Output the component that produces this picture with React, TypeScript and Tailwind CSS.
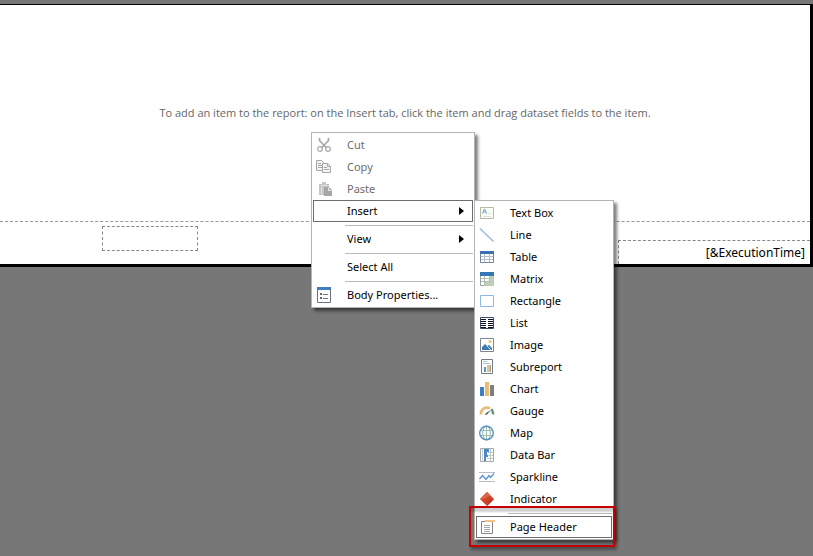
import type { ReactNode } from "react";

type Item = {
  label: string;
  icon?: ReactNode;
  disabled?: boolean;
  active?: boolean;
  submenu?: boolean;
};

type Entry = Item | "separator";

function Icon({ children }: { children?: ReactNode }) {
  return (
    <svg width="16" height="16" viewBox="0 0 16 16" fill="none" className="shrink-0" aria-hidden="true">
      {children}
    </svg>
  );
}

const cutIcon = (
  <g stroke="#a9a9a9">
    <path d="M3.5 1v2.5L10.5 11M12.5 1v2.5L5.5 11" strokeWidth="1.8" />
    <circle cx="4" cy="12" r="2.3" strokeWidth="1.2" />
    <circle cx="12" cy="12" r="2.3" strokeWidth="1.2" />
  </g>
);

const copyIcon = (
  <g stroke="#a6a6a6">
    <path d="M.5 1.5h5l2 2v8h-7zM2 4.5h3M2 6.5h4M2 8.5h4" fill="#f4f4f4" />
    <path d="M6.5 4.5h5l3 3v6h-8zM11.5 4.5v3h3M8 8.5h3M8 10.5h5" fill="#f4f4f4" />
  </g>
);

const pasteIcon = (
  <>
    <path d="M3 3h3V1h4v2h3v4H8v7H3z" fill="#c6c6c6" />
    <path d="M5 4.5h6M5.5 6v7" stroke="#e2e2e2" />
    <path d="M8 6h5l3 3v6H8z" fill="#a6a6a6" />
    <path d="M12.5 6.5v3h3" stroke="#eee" />
  </>
);

const propertiesIcon = (
  <>
    <path d="M1.5 1.5h13v14h-13z" fill="#fff" stroke="#6b737e" />
    <path d="M1 0h14v3H1z" fill="#3f7dbd" />
    <path d="M4 6h2v2H4zM4 10h2v2H4z" fill="#666" />
    <path d="M7 7.5h5M7 11.5h5" stroke="#777" />
  </>
);

const textBoxIcon = (
  <>
    <path d="M1.5 2.5h13v11h-13z" fill="#fbfcf8" stroke="#b2bca3" />
    <path d="M3.5 8.5 5.3 4h.4l1.8 4.5M4.2 7h2.6" stroke="#6fa4c8" />
    <path d="M4 11.5h8M9 8.5h3" stroke="#dfe3d5" />
  </>
);

const lineIcon = <path d="m1 1.5 13.5 13" stroke="#a3bdda" strokeWidth="1.7" />;

const tableIcon = (
  <>
    <path d="M1.5 2.5h13v11h-13z" fill="#fff" stroke="#7186a5" />
    <path d="M1 2h14v3H1z" fill="#3c70b0" />
    <path d="M5.5 5v8M10.5 5v8M2 7.5h12M2 10.5h12" stroke="#b7bec9" />
  </>
);

const matrixIcon = (
  <>
    <path d="M1.5 1.5h13v13h-13z" fill="#fff" stroke="#99a49d" />
    <path d="M10 5h5v10H5v-4h5z" fill="#bdcfb6" />
    <path d="M1 1h14v4H1z" fill="#3677b7" />
    <path d="M5.5 5v9M10.5 5v6M2 7.5h8M2 10.5h9" stroke="#b4bcb7" />
  </>
);

const rectangleIcon = <path d="M1.5 2.5h13v11h-13z" fill="#fff" stroke="#8fb9ec" />;

const listIcon = (
  <>
    <path d="M1.5 2.5h13v11h-13z" fill="#fff" stroke="#3f4964" />
    <path d="M2 4.5h5M9 4.5h5M2 6.5h5M9 6.5h5M2 8.5h5M9 8.5h5M2 10.5h5M9 10.5h5M2 12.5h5M9 12.5h5" stroke="#0b1020" />
  </>
);

const imageIcon = (
  <>
    <path d="M1.5 1.5h13v13h-13z" fill="#fff" stroke="#7c8594" />
    <path d="M3 13v-3l3-3 2 2 2-1 3 3v2z" fill="#3c7ab8" />
    <path d="m8 9 4 4" stroke="#d5e4f1" />
    <circle cx="11" cy="4.5" r="1.5" fill="#edc66f" />
  </>
);

const subreportIcon = (
  <>
    <path d="M2.5.5h11v14h-11z" fill="#fff" stroke="#747b85" />
    <path d="M4 2.5h4M4 4.5h7" stroke="#a9bfd6" />
    <path d="M5 8h2v5H5z" fill="#5e93c9" />
    <path d="M8 6h3v7H8z" fill="#e8c07a" />
    <path d="M11.5 6v7" stroke="#a0a0a0" />
  </>
);

const chartIcon = (
  <>
    <path d="M1 6h4v9H1z" fill="#3d7fc5" />
    <path d="M6 1h4v14H6z" fill="#e6bd72" />
    <path d="M11 4h4v11h-4z" fill="#7f7f7f" />
  </>
);

const gaugeIcon = (
  <>
    <path d="M2 11.5A6 6 0 0 1 11 5.5" stroke="#e6bd78" strokeWidth="2.6" />
    <path d="M12.2 6.2A6 6 0 0 1 14 11.5" stroke="#629b7c" strokeWidth="2.4" />
    <path d="m6 12 1-2 5-3-4 4.5z" fill="#555" />
  </>
);

const mapIcon = (
  <>
    <path d="M7.5 1v14M1 5.5h13M1 10.5h13" stroke="#9cc3ad" />
    <ellipse cx="7.5" cy="8" rx="3.8" ry="7" stroke="#8db8b0" />
    <circle cx="7.5" cy="8" r="6.8" stroke="#5b8fc4" strokeWidth="1.4" />
  </>
);

const dataBarIcon = (
  <>
    <path d="M1.5 1.5h13v13h-13z" fill="#fff" stroke="#a3abb0" />
    <path d="M3 2h1v12H3z" fill="#ccd4d6" />
    <path d="M5 2h5v3H8v3h1v2H7v4H5z" fill="#4a86c8" />
    <path d="M11.5 2v12M9 5.5h5M9 8.5h5M8 11.5h6" stroke="#bcc9c4" />
  </>
);

const sparklineIcon = (
  <>
    <path d="M0 3.5h16M0 12.5h16" stroke="#b9bec2" />
    <path d="m.5 10 3-3.5 3.5 4 3-4 1.5 2L15 4.5" stroke="#5e8fd0" strokeWidth="1.3" />
  </>
);

const indicatorIcon = (
  <>
    <path d="m8 1 7 7-7 7-7-7z" fill="#cf4429" />
    <path d="m8 1 3.5 3.5L4.5 8 1 8z" fill="#de6448" />
    <path d="m8 15 7-7-4 1z" fill="#ae331d" />
  </>
);

const pageHeaderIcon = (
  <>
    <path d="M2.5 2.5h11v12h-11z" fill="#fff" stroke="#858585" />
    <path d="M6 1h10v2H6z" fill="#efc289" />
    <path d="M5 6.5h6M5 8.5h6M5 10.5h6M5 12.5h6" stroke="#aaa" />
  </>
);

const CONTEXT_MENU: Entry[] = [
  { label: "Cut", icon: cutIcon, disabled: true },
  { label: "Copy", icon: copyIcon, disabled: true },
  { label: "Paste", icon: pasteIcon, disabled: true },
  { label: "Insert", active: true, submenu: true },
  "separator",
  { label: "View", submenu: true },
  "separator",
  { label: "Select All" },
  "separator",
  { label: "Body Properties...", icon: propertiesIcon },
];

const INSERT_MENU: Entry[] = [
  { label: "Text Box", icon: textBoxIcon },
  { label: "Line", icon: lineIcon },
  { label: "Table", icon: tableIcon },
  { label: "Matrix", icon: matrixIcon },
  { label: "Rectangle", icon: rectangleIcon },
  { label: "List", icon: listIcon },
  { label: "Image", icon: imageIcon },
  { label: "Subreport", icon: subreportIcon },
  { label: "Chart", icon: chartIcon },
  { label: "Gauge", icon: gaugeIcon },
  { label: "Map", icon: mapIcon },
  { label: "Data Bar", icon: dataBarIcon },
  { label: "Sparkline", icon: sparklineIcon },
  { label: "Indicator", icon: indicatorIcon },
  "separator",
  { label: "Page Header", icon: pageHeaderIcon, active: true },
];

function Menu({ entries, className }: { entries: Entry[]; className: string }) {
  return (
    <div
      role="menu"
      className={`border border-[#b4b4b4] bg-white p-px shadow-[3px_3px_3px_rgba(0,0,0,0.5)] ${className}`}
    >
      {entries.map((entry, i) =>
        entry === "separator" ? (
          <div key={i} role="separator" className="ml-8 h-1.5 pt-[3px]">
            <div className="h-px bg-[#bcbcbc]" />
          </div>
        ) : (
          <button
            key={i}
            role="menuitem"
            disabled={entry.disabled}
            className={`flex h-[22px] w-full items-center border pr-2 pl-0.5 text-left ${
              entry.active ? "border-[#6e6e6e]" : "border-transparent"
            } ${entry.disabled ? "text-[#6d6d6d]" : "text-black"}`}
          >
            <Icon>{entry.icon}</Icon>
            <span className="ml-[15px] flex-1 whitespace-nowrap">{entry.label}</span>
            {entry.submenu && (
              <svg width="5" height="8" viewBox="0 0 5 8" aria-hidden="true">
                <path d="M0 0v8l5-4z" fill="#000" />
              </svg>
            )}
          </button>
        ),
      )}
    </div>
  );
}

export default function App() {
  return (
    <div className="relative min-h-screen overflow-hidden bg-[#777] pt-1 font-['Noto_Sans','Open_Sans',sans-serif] text-[11px] leading-4">
      <main className="border-t border-r-3 border-b-3 border-black bg-white">
        <section className="flex h-[216px] items-center justify-center font-['Open_Sans','Noto_Sans',sans-serif] text-[#666]">
          <p>To add an item to the report: on the Insert tab, click the item and drag dataset fields to the item.</p>
        </section>
        <footer className="flex h-[43px] items-start border-t border-dashed border-[#999]">
          <input
            aria-label="Footer text box"
            className="mt-1 ml-[102px] h-[25px] w-24 border border-dashed border-[#888] px-1"
          />
          <input
            aria-label="Execution time"
            defaultValue="[&ExecutionTime]"
            className="mt-[18px] ml-auto h-6 w-48 border-t border-l border-dashed border-[#888] pr-[5px] text-right text-xs text-black"
          />
        </footer>
      </main>

      <Menu entries={CONTEXT_MENU} className="absolute top-[132px] left-[311px] w-[164px]" />
      <Menu entries={INSERT_MENU} className="absolute top-[200px] left-[474px] w-[140px]" />
      <div className="pointer-events-none absolute top-[506px] left-[469px] h-[41px] w-[146px] border-2 border-[#c40000] shadow-[2px_3px_3px_rgba(0,0,0,0.35),inset_0_4px_2px_rgba(0,0,0,0.18)]" />
    </div>
  );
}
